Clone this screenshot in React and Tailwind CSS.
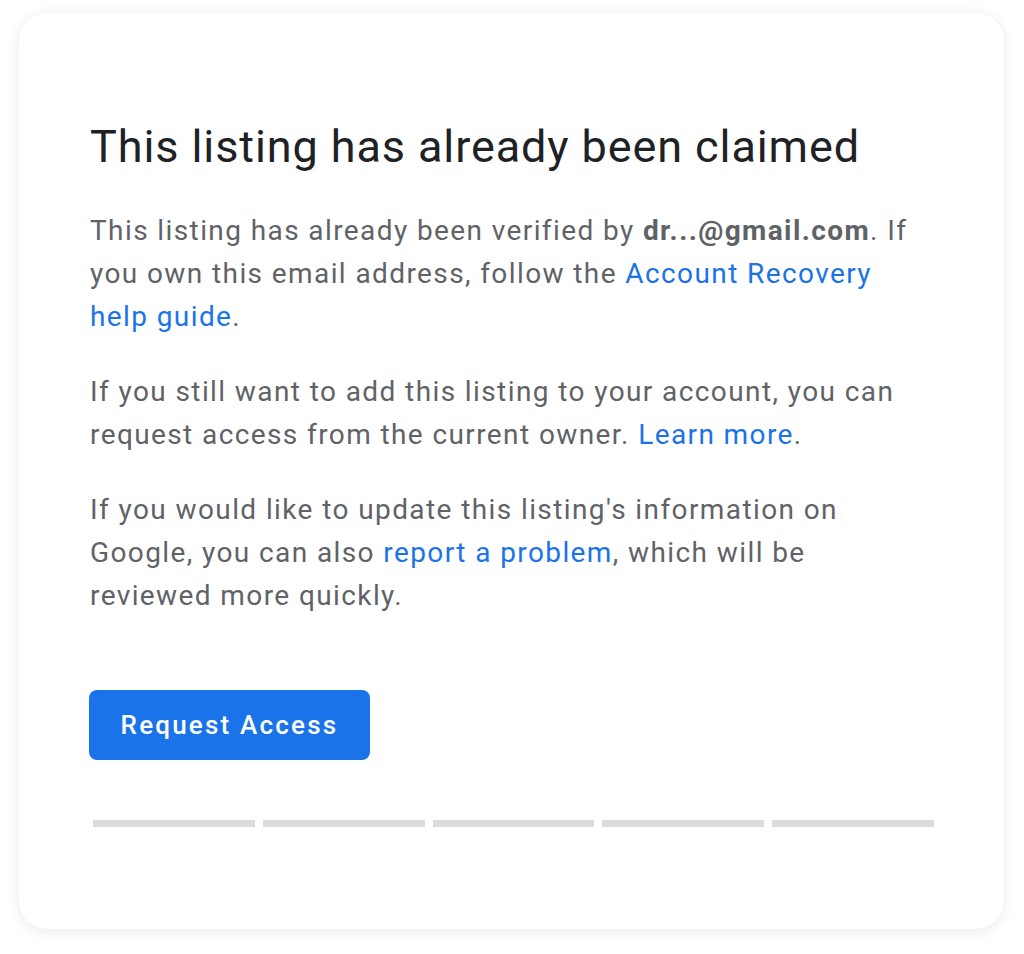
export default function App() {
  return (
    <div className="min-h-[954px] w-[1024px] bg-white pt-[13px] pl-[19px]" style={{ fontFamily: "Roboto, 'Noto Sans', sans-serif" }}>
      <div className="w-[985px] h-[916px] rounded-[28px] bg-white shadow-[0_2px_14px_rgba(0,0,0,0.09)] pl-[71px] pr-[70px] pt-[108px]">
        <h1 className="text-[45px] leading-[52px] text-[#202124] font-normal tracking-[0.9px]">
          This listing has already been claimed
        </h1>
        <div className="mt-[36px] pr-[4px] text-[28px] leading-[43px] text-[#5f6368] tracking-[1.4px]">
          <p>
            This listing has already been verified by <b className="font-bold">dr...@gmail.com</b>. If you own this email address, follow the{" "}
            <a className="text-[#1a73e8]">Account Recovery help guide</a>.
          </p>
          <p className="mt-[32px]">
            If you still want to add this listing to your account, you can request access from the current owner.{" "}
            <a className="text-[#1a73e8]">Learn more</a>.
          </p>
          <p className="mt-[32px]">
            If you would like to update this listing's information on Google, you can also{" "}
            <a className="text-[#1a73e8]">report a problem</a>, which will be reviewed more quickly.
          </p>
        </div>
        <button className="mt-[73px] w-[281px] h-[70px] rounded-[8px] bg-[#1a73e8] text-white text-[26px] font-medium tracking-[2.2px] flex items-center justify-center -ml-[1px]">
          Request Access
        </button>
        <div className="mt-[60px] ml-[3px] flex gap-2">
          <div className="flex-1 h-[7px] bg-[#dadce0]" />
          <div className="flex-1 h-[7px] bg-[#dadce0]" />
          <div className="flex-1 h-[7px] bg-[#dadce0]" />
          <div className="flex-1 h-[7px] bg-[#dadce0]" />
          <div className="flex-1 h-[7px] bg-[#dadce0]" />
        </div>
      </div>
    </div>
  );
}
